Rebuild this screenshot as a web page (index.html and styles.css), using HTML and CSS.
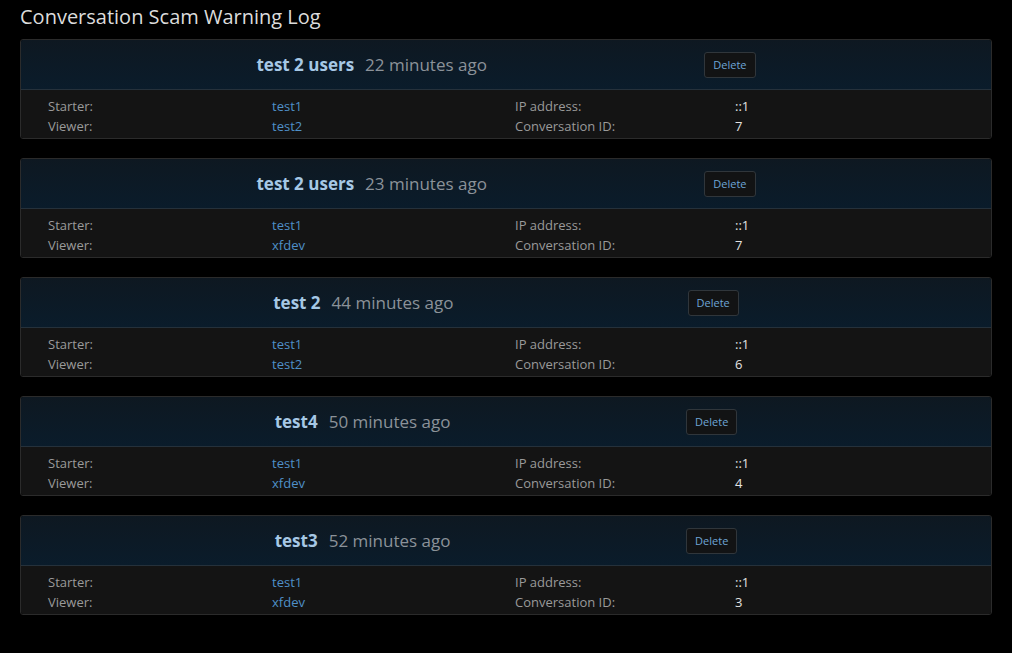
FILE: index.html
```html
<!DOCTYPE html>
<html lang="en">

<head>
    <meta charset="UTF-8">
    <meta name="viewport" content="width=device-width, initial-scale=1.0">
    <title>Conversation Scam Warning Log</title>
    <link rel="stylesheet" href="styles.css">
</head>

<body>
    <h1 class="page-title">Conversation Scam Warning Log</h1>

    <div class="log">
        <div class="entry">
            <div class="entry-head">
                <span></span>
                <div class="entry-title"><b>test 2 users</b><span class="time">22 minutes ago</span></div>
                <span></span>
                <button class="delete" type="button">Delete</button>
                <span></span>
            </div>
            <div class="entry-body">
                <span class="label">Starter:</span><a href="#">test1</a><span class="label">IP address:</span><span class="value">::1</span>
                <span class="label">Viewer:</span><a href="#">test2</a><span class="label">Conversation ID:</span><span class="value">7</span>
            </div>
        </div>

        <div class="entry">
            <div class="entry-head">
                <span></span>
                <div class="entry-title"><b>test 2 users</b><span class="time">23 minutes ago</span></div>
                <span></span>
                <button class="delete" type="button">Delete</button>
                <span></span>
            </div>
            <div class="entry-body">
                <span class="label">Starter:</span><a href="#">test1</a><span class="label">IP address:</span><span class="value">::1</span>
                <span class="label">Viewer:</span><a href="#">xfdev</a><span class="label">Conversation ID:</span><span class="value">7</span>
            </div>
        </div>

        <div class="entry">
            <div class="entry-head">
                <span></span>
                <div class="entry-title"><b>test 2</b><span class="time">44 minutes ago</span></div>
                <span></span>
                <button class="delete" type="button">Delete</button>
                <span></span>
            </div>
            <div class="entry-body">
                <span class="label">Starter:</span><a href="#">test1</a><span class="label">IP address:</span><span class="value">::1</span>
                <span class="label">Viewer:</span><a href="#">test2</a><span class="label">Conversation ID:</span><span class="value">6</span>
            </div>
        </div>

        <div class="entry">
            <div class="entry-head">
                <span></span>
                <div class="entry-title"><b>test4</b><span class="time">50 minutes ago</span></div>
                <span></span>
                <button class="delete" type="button">Delete</button>
                <span></span>
            </div>
            <div class="entry-body">
                <span class="label">Starter:</span><a href="#">test1</a><span class="label">IP address:</span><span class="value">::1</span>
                <span class="label">Viewer:</span><a href="#">xfdev</a><span class="label">Conversation ID:</span><span class="value">4</span>
            </div>
        </div>

        <div class="entry">
            <div class="entry-head">
                <span></span>
                <div class="entry-title"><b>test3</b><span class="time">52 minutes ago</span></div>
                <span></span>
                <button class="delete" type="button">Delete</button>
                <span></span>
            </div>
            <div class="entry-body">
                <span class="label">Starter:</span><a href="#">test1</a><span class="label">IP address:</span><span class="value">::1</span>
                <span class="label">Viewer:</span><a href="#">xfdev</a><span class="label">Conversation ID:</span><span class="value">3</span>
            </div>
        </div>
    </div>
</body>

</html>
```

FILE: styles.css
```css
body {
    margin: 0;
    padding: 0 20px;
    background-color: #000;
    font-family: "Open Sans", "Noto Sans", sans-serif;
    color: #ddd;
}

.page-title {
    margin: 0 0 8px;
    padding-top: 3px;
    font-size: 20px;
    line-height: 28px;
    font-weight: normal;
    color: #dcdcdc;
}

.entry {
    border: 1px solid #2b2b2b;
    border-radius: 3px;
    margin-bottom: 19px;
    overflow: hidden;
}

.entry-head {
    display: grid;
    grid-template-columns: 1fr auto 1fr auto 1fr;
    align-items: center;
    height: 49px;
    background: linear-gradient(to bottom, #0e1821, #0a1c2b);
    border-bottom: 1px solid #25313b;
}

.entry-title {
    margin-right: -18px;
    white-space: nowrap;
    font-size: 17px;
}

.entry-title b {
    color: #a6c8e5;
    margin-right: 11px;
}

.entry-title .time {
    color: #8b9299;
}

.delete {
    height: 26px;
    padding: 0 8px;
    background-color: #121314;
    border: 1px solid #30363b;
    border-radius: 3px;
    color: #6ea5d6;
    font-family: inherit;
    font-size: 11px;
}

.entry-body {
    display: grid;
    grid-template-columns: 224px 243px 220px 1fr;
    padding: 7px 0 2px 27px;
    height: 39px;
    background-color: #141414;
    font-size: 13px;
    line-height: 19px;
}

.entry-body .label {
    color: #9a9a9a;
}

.entry-body a {
    color: #4f90c8;
    text-decoration: none;
}

.entry-body .value {
    color: #e2e2e2;
}
```
